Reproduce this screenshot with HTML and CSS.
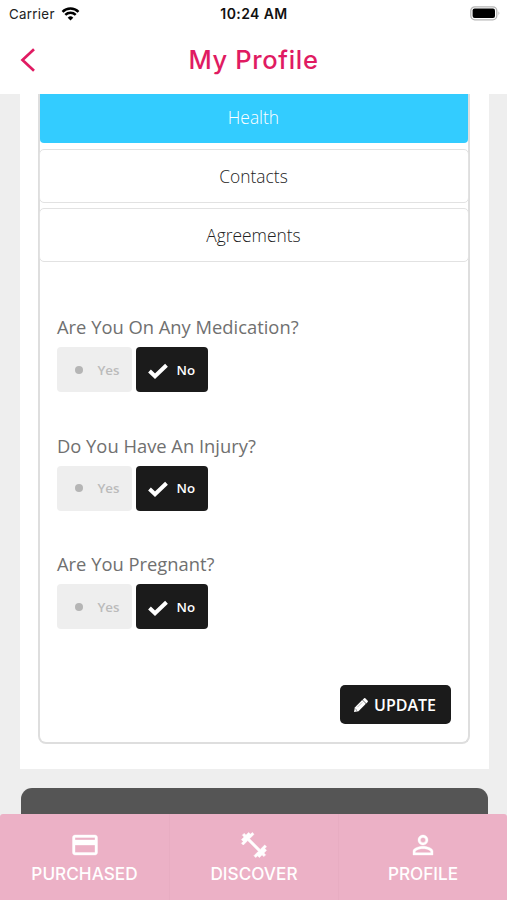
FILE: index.html
```html
<!DOCTYPE html>
<html lang="en">
<head>
<meta charset="utf-8">
<title>My Profile</title>
<link rel="stylesheet" href="styles.css">
</head>
<body>
<div class="app">
  <header class="top">
    <div class="status">
      <div class="carrier"><span>Carrier</span>
        <svg width="19" height="14" viewBox="0 0 18 14" fill="none" stroke="#000" stroke-width="2.5"><path d="M1 4.900a11.400 11.400 0 0 1 16 0M3.800 7.900a7.400 7.400 0 0 1 10.400 0"/><path d="M9 13.500 6.200 10.700a4 4 0 0 1 5.600 0z" fill="#000" stroke="none"/></svg>
      </div>
      <div class="clock">10:24 AM</div>
      <svg class="battery" width="31" height="15" viewBox="0 0 31 15"><rect x=".8" y=".8" width="26" height="13" rx="4" fill="#fff" stroke="#b5b5b5" stroke-width="1.3"/><rect x="2.600" y="2.600" width="22.400" height="9.400" rx="2" fill="#000"/><path d="M28.600 5.200q1.800 2.100 0 4.200z" fill="#999"/></svg>
    </div>
    <div class="nav">
      <svg class="back" width="16" height="26" viewBox="0 0 16 26" fill="none" stroke="#e01b62" stroke-width="2.700"><path d="M14 2.300 2.500 13 14 23.700"/></svg>
      <h1>My Profile</h1>
    </div>
  </header>
  <main class="content">
    <section class="sheet">
      <div class="panel">
        <div class="tab active"><span>Health</span></div>
        <div class="tab"><span>Contacts</span></div>
        <div class="tab"><span>Agreements</span></div>
        <div class="form">
          <div class="question">
            <label>Are You On Any Medication?</label>
            <div class="choices">
              <div class="choice yes"><i class="dot"></i><span>Yes</span></div>
              <div class="choice no"><svg width="22" height="18" viewBox="0 0 22 18"><path d="M2.500 10 8 15.200 19.500 4.200" fill="none" stroke="#fff" stroke-width="4"/></svg><span>No</span></div>
            </div>
          </div>
          <div class="question">
            <label>Do You Have An Injury?</label>
            <div class="choices">
              <div class="choice yes"><i class="dot"></i><span>Yes</span></div>
              <div class="choice no"><svg width="22" height="18" viewBox="0 0 22 18"><path d="M2.500 10 8 15.200 19.500 4.200" fill="none" stroke="#fff" stroke-width="4"/></svg><span>No</span></div>
            </div>
          </div>
          <div class="question">
            <label>Are You Pregnant?</label>
            <div class="choices">
              <div class="choice yes"><i class="dot"></i><span>Yes</span></div>
              <div class="choice no"><svg width="22" height="18" viewBox="0 0 22 18"><path d="M2.500 10 8 15.200 19.500 4.200" fill="none" stroke="#fff" stroke-width="4"/></svg><span>No</span></div>
            </div>
          </div>
          <div class="update"><svg width="14" height="14" viewBox="0 0 14 14" fill="#fff"><path d="M0 14 .8 9.500 8.200 2.100 11.900 5.800 4.500 13.200z"/><path d="M8.600 1.700 10.100.3q.6-.5 1.200 0l2.400 2.400q.5.600 0 1.200L12.300 5.400z"/><path d="M1.400 11l1.600 1.600" stroke="#1b1b1b" stroke-width=".6"/><path d="M3.400 9.200 8.200 4.400" stroke="#888" stroke-width=".6"/></svg><span>UPDATE</span></div>
        </div>
      </div>
    </section>
    <div class="footer-card"></div>
  </main>
  <nav class="tabs">
    <div class="item"><svg width="30" height="30" viewBox="0 0 24 24" fill="#fff" stroke="#fff" stroke-width=".3"><path d="M20 4H4c-1.100 0-2 .9-2 2v12c0 1.100.9 2 2 2h16c1.100 0 2-.9 2-2V6c0-1.100-.9-2-2-2zm0 14H4v-6h16v6zm0-10H4V6h16v2z"/></svg><span>PURCHASED</span></div>
    <div class="item"><svg width="30" height="30" viewBox="0 0 24 24" fill="#fff" stroke="#fff" stroke-width=".5"><path d="M20.570 14.860 22 13.430 20.570 12 17 15.570 8.430 7 12 3.430 10.570 2 9.140 3.430 7.710 2 5.570 4.140 4.140 2.710 2.710 4.140l1.430 1.430L2 7.710l1.430 1.430L2 10.570 3.430 12 7 8.430 15.570 17 12 20.570 13.430 22l1.430-1.430L16.290 22l2.140-2.140 1.430 1.430 1.430-1.430-1.430-1.430L22 16.290z"/></svg><span>DISCOVER</span></div>
    <div class="item"><svg width="30" height="30" viewBox="0 0 24 24" fill="#fff" stroke="#fff" stroke-width=".3"><path d="M12 5.900a2.100 2.100 0 1 1 0 4.200 2.100 2.100 0 0 1 0-4.200m0 9c2.970 0 6.100 1.460 6.100 2.100v1.100H5.900V17c0-.64 3.130-2.100 6.100-2.100M12 4C9.790 4 8 5.790 8 8s1.790 4 4 4 4-1.790 4-4-1.790-4-4-4zm0 9c-2.670 0-8 1.340-8 4v3h16v-3c0-2.660-5.330-4-8-4z"/></svg><span>PROFILE</span></div>
  </nav>
</div>
</body>
</html>
```

FILE: styles.css
```css
* { box-sizing: border-box; }
body { margin: 0; font-family: "Open Sans", sans-serif; }
.app { width: 507px; height: 900px; display: flex; flex-direction: column; overflow: hidden; background: #eee; }
.top { height: 94px; flex: none; background: #fff; font-family: Inter, sans-serif; }
.status { height: 27px; padding: 0 6px 0 9px; display: grid; grid-template-columns: 1fr auto 1fr; align-items: center; font-size: 13.3px; color: #111; }
.carrier { display: flex; align-items: center; gap: 6px; letter-spacing: .3px; color: #222; }
.clock { font-size: 14px; font-weight: 600; letter-spacing: .4px; transform: translateX(-1px); }
.battery { justify-self: end; }
.nav { height: 65px; display: grid; grid-template-columns: 40px 1fr 40px; align-items: center; }
.back { margin-left: 20px; }
h1 { margin: 0; text-align: center; font-size: 25.5px; font-weight: 450; letter-spacing: .65px; color: #e01b62; }
.content { flex: none; height: 720px; overflow: hidden; }
.sheet { height: 675px; margin: 0 18.5px 0 19.5px; padding: 0 19px 0 18px; background: #fff; }
.panel { height: 650px; border: 2px solid #dedede; border-top: 0; border-radius: 0 0 8px 8px; }
.tab { height: 54px; margin: 0 -1px 4.5px; border: 1.5px solid #e2e2e2; border-radius: 5px; display: flex; align-items: center; justify-content: center; font-size: 17.4px; font-weight: 300; color: #222; }
.tab.active { height: 49px; margin: 0 0 6px; padding-bottom: 3px; border: 0; border-radius: 0 0 4px 4px; background: #3cf; color: #fff; }
.form { padding: 45px 17px 0 17.5px; }
.question { height: 118.5px; }
label { display: block; height: 36px; line-height: 32px; font-size: 18.35px; color: #707070; white-space: nowrap; }
.choices { display: flex; gap: 4px; }
.choice { height: 45px; border-radius: 4px; display: flex; align-items: center; font-size: 13.3px; font-weight: 600; }
.yes { width: 75px; background: #eee; color: #bbb; padding-left: 18px; gap: 14.5px; }
.no { width: 72px; background: #1b1b1b; color: #fff; padding-left: 11px; gap: 7.5px; }
.dot { width: 8px; height: 8px; border-radius: 50%; background: #b5b5b5; }
.update { width: 111px; height: 39px; margin: 18.5px 0 0 auto; border-radius: 5px; background: #1b1b1b; color: #fff; display: flex; align-items: center; justify-content: center; gap: 6px; font-size: 16px; font-weight: 600; }
.footer-card { height: 60px; margin: 19px 19.5px 0 20.5px; border-radius: 11px 11px 0 0; background: #555; }
.tabs { height: 86px; flex: none; display: grid; grid-template-columns: repeat(3, 1fr); background: #ecb1c6; font-family: Inter, sans-serif; border-radius: 3px 3px 0 0; }
.item { display: flex; flex-direction: column; align-items: center; padding-top: 16px; color: #fff; font-size: 17.2px; font-weight: 500; line-height: 28px; }
.item + .item { border-left: 1px solid #e8adc2; }
```
